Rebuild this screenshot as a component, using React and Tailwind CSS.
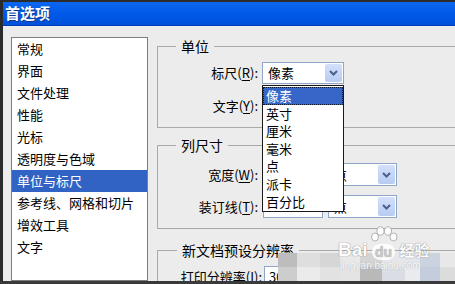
import React from 'react'

const ITEMS = ['常规', '界面', '文件处理', '性能', '光标', '透明度与色域', '单位与标尺', '参考线、网格和切片', '增效工具', '文字']
const UNITS = ['像素', '英寸', '厘米', '毫米', '点', '派卡', '百分比']

function Chevron() {
  return (
    <svg width="9" height="6" viewBox="0 0 9 6">
      <polyline points="1,1 4.5,4.5 8,1" fill="none" stroke="#4a5f8c" strokeWidth="2" />
    </svg>
  )
}

function Combo({ text, className }) {
  return (
    <div className={`flex items-center border border-[#8fa6c8] bg-white ${className}`}>
      <span className="flex-1 overflow-hidden whitespace-nowrap pl-[5px]">{text}</span>
      <div className="m-px flex h-[calc(100%-2px)] w-[17px] items-center justify-center rounded-[2px] bg-gradient-to-b from-[#d4e0fa] to-[#b7cbf2]">
        <Chevron />
      </div>
    </div>
  )
}

function Label({ text, u, w = 'w-[100px]' }) {
  return (
    <div className={`${w} whitespace-nowrap text-right`}>
      {text}(<span className="underline underline-offset-2">{u}</span>):
    </div>
  )
}

function Group({ title, className = '', children }) {
  return (
    <fieldset className={`border-b border-l border-t border-[#a9a9a9] ${className}`}>
      <legend className="ml-[18px] px-[5px] text-[14px] leading-[14px]">{title}</legend>
      {children}
    </fieldset>
  )
}

export default function App() {
  return (
    <div className="relative flex h-[284px] w-[455px] flex-col overflow-hidden bg-[#2b2b2b] font-['Noto_Sans_CJK_SC','Noto_Sans',sans-serif] text-[13px] text-black">
      <div className="ml-[3px] mt-[2px] flex min-h-0 flex-1 flex-col">
        {/* Title bar */}
        <div className="flex h-[24px] items-center border-b border-[#0042b4] bg-gradient-to-b from-[#0d66f0] via-[#005ae8] to-[#0050da] pl-[2px] text-[15px] font-bold text-white [text-shadow:1px_1px_0_#0a3a90]">
          首选项
        </div>

        <div className="flex min-h-0 flex-1 bg-[#ececec] pl-[8px] pt-[11px]">
          {/* Category list */}
          <div className="w-[137px] border border-[#7d7d7d] bg-white">
            {ITEMS.map(item => (
              <div key={item}
                className={`h-[22px] whitespace-nowrap pl-[5px] leading-[22px] ${item === '单位与标尺' ? 'bg-[#3163c4] text-white' : ''}`}>
                {item}
              </div>
            ))}
          </div>

          {/* Settings */}
          <div className="ml-[9px] flex-1 pt-[2px]">
            <Group title="单位">
              <div className="pb-[10px] pt-[9px]">
                <div className="flex h-[22px] items-center">
                  <Label text="标尺" u="R" />
                  <Combo text="像素" className="ml-[4px] h-[22px] w-[82px]" />
                </div>
                <div className="mt-[11px] flex h-[22px] items-center">
                  <Label text="文字" u="Y" />
                  <Combo text="点" className="ml-[4px] h-[22px] w-[82px]" />
                </div>
              </div>
            </Group>

            <Group title="列尺寸" className="mt-[10px]">
              <div className="pb-[10px] pt-[11px]">
                <div className="flex h-[23px] items-center">
                  <Label text="宽度" u="W" />
                  <div className="ml-[5px] h-[23px] w-[60px] border border-[#8fa6c8] bg-white pl-[5px] leading-[21px]">180</div>
                  <Combo text="点" className="ml-[5px] h-[23px] w-[69px]" />
                </div>
                <div className="mt-[9px] flex h-[23px] items-center">
                  <Label text="装订线" u="T" />
                  <div className="ml-[5px] h-[23px] w-[60px] border border-[#8fa6c8] bg-white pl-[5px] leading-[21px]">12</div>
                  <Combo text="点" className="ml-[5px] h-[23px] w-[69px]" />
                </div>
              </div>
            </Group>

            <fieldset className="mt-[14px] border-l border-t border-[#a9a9a9]">
              <legend className="ml-[19px] px-[5px] text-[14px] leading-[14px]">新文档预设分辨率</legend>
              <div className="flex items-center pt-[9px]">
                <div className="w-[104px] whitespace-nowrap text-right">打印分辨率(I):</div>
                <div className="ml-[2px] h-[22px] w-[60px] border border-[#8fa6c8] bg-white pl-[4px] leading-[20px]">300</div>
              </div>
            </fieldset>
          </div>
        </div>
      </div>
      <div className="h-[3px] bg-[#3a3a3a]" />

      {/* Open unit dropdown */}
      <div className="absolute left-[262px] top-[85px] w-[82px] border border-[#1a1a1a] bg-white py-px">
        {UNITS.map((u, i) => (
          <div key={u}
            className={`h-[17.6px] pl-[3px] leading-[17.6px] ${i === 0 ? 'bg-[#3566c8] text-white outline-1 outline-dotted outline-offset-[-1px] outline-[#0c1a3a]' : ''}`}>
            {u}
          </div>
        ))}
      </div>

      {/* Mosaic */}
      <div className="absolute left-[278px] top-[253px] flex h-[28px] w-[177px]">
        <div className="flex w-[19px] flex-col"><div className="flex-1 bg-[#bdbdbd]" /><div className="flex-1 bg-[#cdcdcd]" /></div>
        <div className="flex w-[23px] flex-col"><div className="flex-1 bg-[#dedede]" /><div className="flex-1 bg-[#ebebeb]" /></div>
        <div className="flex w-[20px] flex-col"><div className="flex-1 bg-[#d6d6d6]" /><div className="flex-1 bg-[#e2e2e2]" /></div>
        <div className="flex w-[20px] flex-col"><div className="flex-1 bg-[#e9e9e9]" /><div className="flex-1 bg-[#e4e4e4]" /></div>
        <div className="flex w-[22px] flex-col"><div className="flex-1 bg-[#d4d4d4]" /><div className="flex-1 bg-[#b9b9b9]" /></div>
        <div className="flex w-[23px] flex-col"><div className="flex-1 bg-[#e5e7eb]" /><div className="flex-1 bg-[#dadde3]" /></div>
        <div className="flex w-[15px] flex-col"><div className="flex-1 bg-[#e2e5ea]" /><div className="flex-1 bg-[#e9ebee]" /></div>
        <div className="flex w-[20px] flex-col"><div className="flex-1 bg-[#cbd3e1]" /><div className="flex-1 bg-[#c4cddd]" /></div>
        <div className="flex w-[15px] flex-col"><div className="flex-1 bg-[#e8e8e8]" /><div className="flex-1 bg-[#dcdcdc]" /></div>
      </div>

      {/* Watermark */}
      <div className="absolute left-[338px] top-[226px] flex flex-col items-start opacity-90">
        <div className="flex items-end">
          <span className="font-['Liberation_Sans',sans-serif] text-[19px] font-bold leading-[20px] text-white [text-shadow:0_0_1px_#8a8a8a,0_0_1px_#8a8a8a]">Bai</span>
          <div className="relative mx-[1px] flex h-[34px] w-[30px] flex-col items-center justify-end">
            <svg width="30" height="16" viewBox="0 0 30 16" className="absolute top-0">
              <ellipse cx="6" cy="11" rx="3.5" ry="4" fill="#fff" stroke="#9a9a9a" strokeWidth="0.8" />
              <ellipse cx="11.5" cy="5" rx="3.5" ry="4.2" fill="#fff" stroke="#9a9a9a" strokeWidth="0.8" />
              <ellipse cx="19" cy="5" rx="3.5" ry="4.2" fill="#fff" stroke="#9a9a9a" strokeWidth="0.8" />
              <ellipse cx="24.5" cy="11" rx="3.5" ry="4" fill="#fff" stroke="#9a9a9a" strokeWidth="0.8" />
            </svg>
            <span className="rounded-[8px] bg-white px-[3px] font-['Liberation_Sans',sans-serif] text-[14px] font-bold leading-[16px] text-[#c8c8c8] [text-shadow:0_0_1px_#8a8a8a]">du</span>
          </div>
          <span className="text-[15px] font-bold leading-[20px] text-white [text-shadow:0_0_1px_#8a8a8a,0_0_1px_#8a8a8a]">经验</span>
        </div>
        <span className="pl-[2px] font-['Liberation_Sans',sans-serif] text-[10px] leading-[12px] text-white [text-shadow:0_0_1px_#9a9a9a]">jingyan.baidu.com</span>
      </div>
    </div>
  )
}
